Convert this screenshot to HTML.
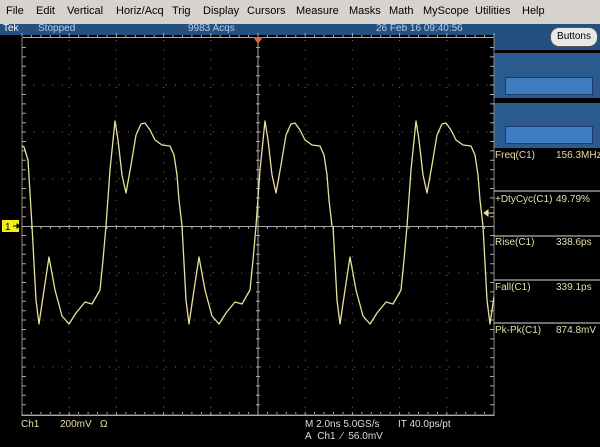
<!DOCTYPE html>
<html><head><style>
body{margin:0;width:600px;height:447px;background:#000;overflow:hidden;position:relative;font-family:"Liberation Sans",sans-serif}
.menu{position:absolute;left:0;top:0;width:600px;height:24px;background:#d6d3ce;font-size:11px;color:#000}
.menu span{position:absolute;top:5px}
.status{position:absolute;left:0;top:24px;width:600px;height:11px;background:#24507f}
.status span{position:absolute;top:-1px;font-size:10px;color:#b8cbe6}
.t{position:absolute;font-size:10px;color:#e6dfae;white-space:nowrap}
</style></head><body>
<div class="menu">
<span style="left:6px">File</span><span style="left:36px">Edit</span><span style="left:67px">Vertical</span><span style="left:116px">Horiz/Acq</span><span style="left:172px">Trig</span><span style="left:203px">Display</span><span style="left:247px">Cursors</span><span style="left:296px">Measure</span><span style="left:349px">Masks</span><span style="left:389px">Math</span><span style="left:423px">MyScope</span><span style="left:475px">Utilities</span><span style="left:522px">Help</span>
</div>
<div class="status">
<span style="left:3px;color:#fff">Tek</span><span style="left:38px">Stopped</span><span style="left:188px">9983 Acqs</span><span style="left:376px">26 Feb 16 09:40:56</span>
</div>
<div style="position:absolute;left:494px;top:35px;width:106px;height:15px;background:#24507f"></div>
<div style="position:absolute;left:550px;top:27px;width:46px;height:18px;border-radius:9px;background:#e8e8e8;border:1px solid #555;font-size:10px;line-height:18px;text-align:center;color:#000">Buttons</div>
<div style="position:absolute;left:494px;top:53px;width:106px;height:45px;background:#2a5a8e"><div style="position:absolute;left:11px;top:24px;width:86px;height:16px;background:#3d7cc0;border:1px solid #1a3c66"></div></div>
<div style="position:absolute;left:494px;top:103px;width:106px;height:45px;background:#2a5a8e"><div style="position:absolute;left:11px;top:23px;width:86px;height:16px;background:#3d7cc0;border:1px solid #1a3c66"></div></div>
<svg width="600" height="447" style="position:absolute;left:0;top:0">
<defs>
<clipPath id="c"><rect x="22" y="36" width="472" height="380"/></clipPath>
<path id="p" fill="none" stroke="#e8e29a" stroke-width="1.3" stroke-linejoin="round" d="M0,226 L4,300 L7,324 L12,290 L17,257 L23,290 L30,316 L37,324 L44,313 L53,302 L60,304 L68,290 L71,260 L74,226 L78,170 L83,121 L86,140 L90,175 L94,193 L99,165 L104,135 L109,124 L113,123 L118,130 L123,140 L130,145 L138,146 L142,155 L145,175 L147,200 L150,226"/>
</defs>
<g stroke="#8a8a8a" stroke-width="1" fill="none">
<path d="M22,38 V415 H494 V38"/>
<path d="M22,37.5 H494 M22,415.5 H494" stroke="#aaa"/>
<path d="M69.2,40 V413 M116.4,40 V413 M163.6,40 V413 M210.8,40 V413 M305.2,40 V413 M352.4,40 V413 M399.6,40 V413 M446.8,40 V413" stroke-dasharray="1,8.4" stroke="#777"/>
<path d="M24,85 H492 M24,132 H492 M24,179 H492 M24,273 H492 M24,320 H492 M24,367 H492" stroke-dasharray="1,8.44" stroke="#777"/>
<path d="M22,226.5 H494 M258,38 V415" stroke="#aaa"/>
</g>
<g stroke="#aaa" stroke-width="1">
<path id="tx" d="M22,33 V37 M31.4,35 V37 M40.9,35 V37 M50.3,35 V37 M59.8,35 V37 M69.2,33 V37 M78.6,35 V37 M88.1,35 V37 M97.5,35 V37 M107,35 V37 M116.4,33 V37 M125.8,35 V37 M135.3,35 V37 M144.7,35 V37 M154.2,35 V37 M163.6,33 V37 M173,35 V37 M182.5,35 V37 M191.9,35 V37 M201.4,35 V37 M210.8,33 V37 M220.2,35 V37 M229.7,35 V37 M239.1,35 V37 M248.6,35 V37 M258,33 V37 M267.4,35 V37 M276.9,35 V37 M286.3,35 V37 M295.8,35 V37 M305.2,33 V37 M314.6,35 V37 M324.1,35 V37 M333.5,35 V37 M343,35 V37 M352.4,33 V37 M361.8,35 V37 M371.3,35 V37 M380.7,35 V37 M390.2,35 V37 M399.6,33 V37 M409,35 V37 M418.5,35 V37 M427.9,35 V37 M437.4,35 V37 M446.8,33 V37 M456.2,35 V37 M465.7,35 V37 M475.1,35 V37 M484.6,35 V37 M494,33 V37"/>
<use href="#tx" transform="translate(0,449) scale(1,-1)"/>
<use href="#tx" transform="translate(0,192)"/>
</g>
<g stroke="#aaa" stroke-width="1">
<path id="ty" d="M22,47.5 H26 M22,56.9 H26 M22,66.3 H26 M22,75.7 H26 M22,94.5 H26 M22,103.9 H26 M22,113.3 H26 M22,122.7 H26 M22,141.5 H26 M22,150.9 H26 M22,160.3 H26 M22,169.7 H26 M22,188.5 H26 M22,197.9 H26 M22,207.3 H26 M22,216.7 H26 M22,235.5 H26 M22,244.9 H26 M22,254.3 H26 M22,263.7 H26 M22,282.5 H26 M22,291.9 H26 M22,301.3 H26 M22,310.7 H26 M22,329.5 H26 M22,338.9 H26 M22,348.3 H26 M22,357.7 H26 M22,376.5 H26 M22,385.9 H26 M22,395.3 H26 M22,404.7 H26 M22,85 H26 M22,132 H26 M22,179 H26 M22,273 H26 M22,320 H26 M22,367 H26"/>
<use href="#ty" transform="translate(516,0) scale(-1,1)"/>
<use href="#ty" transform="translate(234,0)"/>
</g>
<g clip-path="url(#c)">
<path fill="none" stroke="#e8e29a" stroke-width="1.3" d="M20,145 L24,147 L28,160 L32,226"/>
<use href="#p" x="32"/><use href="#p" x="182"/><use href="#p" x="333"/><use href="#p" x="483"/>
</g>
<polygon points="253,37 263,37 258,44" fill="#e06040"/>
<path d="M484,213 H494 M484,213 l4,-3 v6z" stroke="#e8e29a" fill="#e8e29a"/>
<rect x="2" y="220" width="17" height="12" fill="#f2ee20"/>
<text x="5" y="230" font-size="10" font-family="Liberation Sans" fill="#000">1</text>
<path d="M13,226 H20 M20,226 l-3,-2 v4z" stroke="#000" fill="#000"/>
<g stroke="#ddd" stroke-width="1"><path d="M494,191 H600 M494,236 H600 M494,280 H600 M494,323 H600"/></g>
</svg>
<div class="t" style="left:495px;top:150px">Freq(C1)</div><div class="t" style="left:556px;top:150px">156.3MHz</div>
<div class="t" style="left:495px;top:194px">+DtyCyc(C1)</div><div class="t" style="left:556px;top:194px">49.79%</div>
<div class="t" style="left:495px;top:237px">Rise(C1)</div><div class="t" style="left:556px;top:237px">338.6ps</div>
<div class="t" style="left:495px;top:282px">Fall(C1)</div><div class="t" style="left:556px;top:282px">339.1ps</div>
<div class="t" style="left:495px;top:325px">Pk-Pk(C1)</div><div class="t" style="left:556px;top:325px">874.8mV</div>
<div class="t" style="left:21px;top:419px">Ch1</div>
<div class="t" style="left:60px;top:419px">200mV</div>
<div class="t" style="left:100px;top:419px">Ω</div>
<div class="t" style="left:305px;top:419px;color:#ddd">M 2.0ns 5.0GS/s</div>
<div class="t" style="left:398px;top:419px;color:#ddd">IT 40.0ps/pt</div>
<div class="t" style="left:305px;top:431px;color:#ddd">A&nbsp; Ch1 &nbsp;⁄ &nbsp;56.0mV</div>
</body></html>
